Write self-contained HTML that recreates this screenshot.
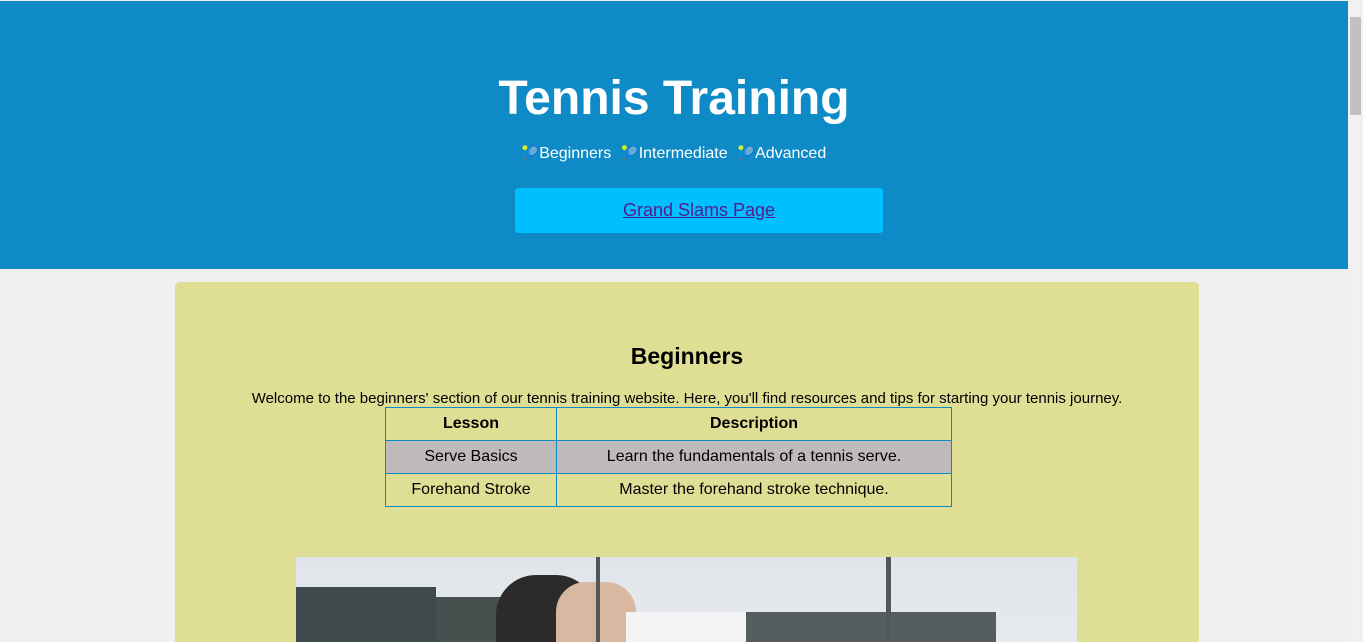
<!DOCTYPE html>
<html><head><style>
html,body{margin:0;padding:0;width:1363px;height:642px;overflow:hidden}
body{background:#f0f0f0;font-family:"Liberation Sans",Arial,sans-serif;position:relative}
.hdr{position:absolute;left:0;top:1px;width:1348px;height:268px;background:#0e8bc6;color:#fff;text-align:center}
.hdr h1{position:absolute;top:72px;left:0;width:100%;margin:0;font-size:48px;font-weight:bold;line-height:52px}
.nav{position:absolute;top:144px;left:0;width:100%;font-size:16px}
.nav span{margin:0 5px}
.nav i{font-style:normal;font-size:14px}
.btn{position:absolute;left:515px;top:187px;width:368px;height:45px;background:#00bfff;border-radius:3px;text-align:center;line-height:44px;font-size:18px}
.btn a{color:#551a8b;text-decoration:underline}
.sb{position:absolute;left:1348px;top:0;width:15px;height:642px;background:#f1f1f1}
.sb div{position:absolute;left:2px;top:17px;width:11px;height:98px;background:#c1c1c1}
.panel{position:absolute;left:175px;top:282px;width:1024px;height:360px;background:#dede94;border-radius:5px 5px 0 0}
h2{position:absolute;top:342px;left:175px;width:1024px;text-align:center;margin:0;font-size:23px;line-height:28px}
.p{position:absolute;top:390px;left:175px;width:1024px;text-align:center;font-size:15px}
table{position:absolute;left:385px;top:407px;width:567px;border-collapse:collapse;font-size:16px;text-align:center}
td,th{border:1px solid #0e8bc6;height:32px;padding:0}
th{width:170px}
.g td{background:#bfbbbb}
.img{position:absolute;left:296px;top:557px;width:781px;height:85px;background:linear-gradient(#dfe5ea,#e6eaee);overflow:hidden}
</style></head><body>
<div class="hdr">
<h1>Tennis Training</h1>
<div class="nav"><span><i>🎾</i>Beginners</span><span><i>🎾</i>Intermediate</span><span><i>🎾</i>Advanced</span></div>
<div class="btn"><a>Grand Slams Page</a></div>
</div>
<div class="sb"><div></div></div>
<div class="panel"></div>
<h2>Beginners</h2>
<div class="p">Welcome to the beginners' section of our tennis training website. Here, you'll find resources and tips for starting your tennis journey.</div>
<table>
<tr><th>Lesson</th><th style="width:auto">Description</th></tr>
<tr class="g"><td>Serve Basics</td><td>Learn the fundamentals of a tennis serve.</td></tr>
<tr><td>Forehand Stroke</td><td>Master the forehand stroke technique.</td></tr>
</table>
<div class="img">
<div style="position:absolute;left:0;top:30px;width:140px;height:60px;background:#3e4a4c"></div>
<div style="position:absolute;left:140px;top:40px;width:160px;height:50px;background:#46504f"></div>
<div style="position:absolute;left:200px;top:18px;width:100px;height:72px;background:#2d2a2a;border-radius:40px 40px 0 0"></div>
<div style="position:absolute;left:260px;top:25px;width:80px;height:65px;background:#d8b8a0;border-radius:30px 30px 0 0"></div>
<div style="position:absolute;left:330px;top:55px;width:120px;height:35px;background:#f4f4f4"></div>
<div style="position:absolute;left:450px;top:55px;width:250px;height:35px;background:#555d5e"></div>
<div style="position:absolute;left:590px;top:0;width:5px;height:90px;background:#505858"></div>
<div style="position:absolute;left:300px;top:0;width:4px;height:90px;background:#505858"></div>
</div>
</body></html>
